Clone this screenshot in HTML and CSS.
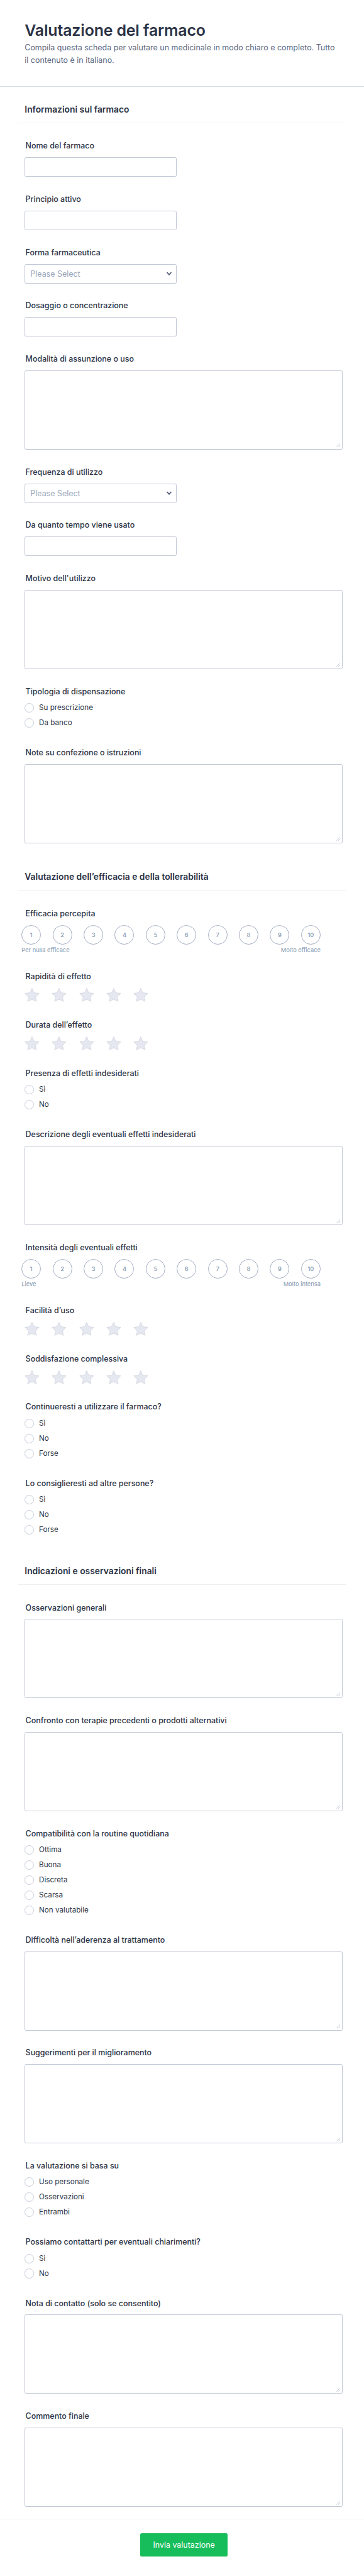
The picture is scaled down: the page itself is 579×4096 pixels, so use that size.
FILE: index.html
```html
<!DOCTYPE html>
<html lang="it">
<head>
    <meta charset="UTF-8">
    <meta name="viewport" content="width=device-width, initial-scale=1.0">
    <title>Valutazione del farmaco</title>
    <link rel="stylesheet" href="styles.css">
</head>
<body>
    <svg class="sprite" aria-hidden="true">
        <symbol id="star" viewBox="0 0 24 22">
            <path d="M11.900.5 15 7.500l7.900 1.100-5.500 5.800 1.500 6.900-7-3.300-7 3.300 1.500-6.900L.9 8.600l7.900-1.100z"/>
        </symbol>
    </svg>

    <form class="form">
        <header class="form-header">
            <h1>Valutazione del farmaco</h1>
            <p>Compila questa scheda per valutare un medicinale in modo chiaro e completo. Tutto il contenuto è in italiano.</p>
        </header>

        <h2 class="section-title">Informazioni sul farmaco</h2>
        <div class="field"><label>Nome del farmaco</label><input class="text" type="text"></div>
        <div class="field"><label>Principio attivo</label><input class="text" type="text"></div>
        <div class="field">
            <label>Forma farmaceutica</label>
            <div class="select">Please Select <svg viewBox="0 0 10 8"><path d="M1.500 2l3.500 3.700L8.500 2"/></svg></div>
        </div>
        <div class="field"><label>Dosaggio o concentrazione</label><input class="text" type="text"></div>
        <div class="field"><label>Modalità di assunzione o uso</label><textarea></textarea></div>
        <div class="field">
            <label>Frequenza di utilizzo</label>
            <div class="select">Please Select <svg viewBox="0 0 10 8"><path d="M1.500 2l3.500 3.700L8.500 2"/></svg></div>
        </div>
        <div class="field"><label>Da quanto tempo viene usato</label><input class="text" type="text"></div>
        <div class="field"><label>Motivo dell'utilizzo</label><textarea></textarea></div>
        <div class="field">
            <label>Tipologia di dispensazione</label>
            <div class="options">
                <label><input type="radio" name="tipologia">Su prescrizione</label>
                <label><input type="radio" name="tipologia">Da banco</label>
            </div>
        </div>
        <div class="field"><label>Note su confezione o istruzioni</label><textarea></textarea></div>

        <h2 class="section-title">Valutazione dell’efficacia e della tollerabilità</h2>
        <div class="field">
            <label>Efficacia percepita</label>
            <div class="scale">
                <div class="scale-row"><span>1</span><span>2</span><span>3</span><span>4</span><span>5</span><span>6</span><span>7</span><span>8</span><span>9</span><span>10</span></div>
                <div class="scale-legend"><span>Per nulla efficace</span><span>Molto efficace</span></div>
            </div>
        </div>
        <div class="field">
            <label>Rapidità di effetto</label>
            <div class="stars"><svg><use href="#star"/></svg><svg><use href="#star"/></svg><svg><use href="#star"/></svg><svg><use href="#star"/></svg><svg><use href="#star"/></svg></div>
        </div>
        <div class="field">
            <label>Durata dell’effetto</label>
            <div class="stars"><svg><use href="#star"/></svg><svg><use href="#star"/></svg><svg><use href="#star"/></svg><svg><use href="#star"/></svg><svg><use href="#star"/></svg></div>
        </div>
        <div class="field">
            <label>Presenza di effetti indesiderati</label>
            <div class="options">
                <label><input type="radio" name="effetti">Sì</label>
                <label><input type="radio" name="effetti">No</label>
            </div>
        </div>
        <div class="field"><label>Descrizione degli eventuali effetti indesiderati</label><textarea></textarea></div>
        <div class="field">
            <label>Intensità degli eventuali effetti</label>
            <div class="scale">
                <div class="scale-row"><span>1</span><span>2</span><span>3</span><span>4</span><span>5</span><span>6</span><span>7</span><span>8</span><span>9</span><span>10</span></div>
                <div class="scale-legend"><span>Lieve</span><span>Molto intensa</span></div>
            </div>
        </div>
        <div class="field">
            <label>Facilità d’uso</label>
            <div class="stars"><svg><use href="#star"/></svg><svg><use href="#star"/></svg><svg><use href="#star"/></svg><svg><use href="#star"/></svg><svg><use href="#star"/></svg></div>
        </div>
        <div class="field">
            <label>Soddisfazione complessiva</label>
            <div class="stars"><svg><use href="#star"/></svg><svg><use href="#star"/></svg><svg><use href="#star"/></svg><svg><use href="#star"/></svg><svg><use href="#star"/></svg></div>
        </div>
        <div class="field">
            <label>Continueresti a utilizzare il farmaco?</label>
            <div class="options">
                <label><input type="radio" name="continuare">Sì</label>
                <label><input type="radio" name="continuare">No</label>
                <label><input type="radio" name="continuare">Forse</label>
            </div>
        </div>
        <div class="field">
            <label>Lo consiglieresti ad altre persone?</label>
            <div class="options">
                <label><input type="radio" name="consigliare">Sì</label>
                <label><input type="radio" name="consigliare">No</label>
                <label><input type="radio" name="consigliare">Forse</label>
            </div>
        </div>

        <h2 class="section-title">Indicazioni e osservazioni finali</h2>
        <div class="field"><label>Osservazioni generali</label><textarea></textarea></div>
        <div class="field"><label>Confronto con terapie precedenti o prodotti alternativi</label><textarea></textarea></div>
        <div class="field">
            <label>Compatibilità con la routine quotidiana</label>
            <div class="options">
                <label><input type="radio" name="routine">Ottima</label>
                <label><input type="radio" name="routine">Buona</label>
                <label><input type="radio" name="routine">Discreta</label>
                <label><input type="radio" name="routine">Scarsa</label>
                <label><input type="radio" name="routine">Non valutabile</label>
            </div>
        </div>
        <div class="field"><label>Difficoltà nell’aderenza al trattamento</label><textarea></textarea></div>
        <div class="field"><label>Suggerimenti per il miglioramento</label><textarea></textarea></div>
        <div class="field">
            <label>La valutazione si basa su</label>
            <div class="options">
                <label><input type="radio" name="base">Uso personale</label>
                <label><input type="radio" name="base">Osservazioni</label>
                <label><input type="radio" name="base">Entrambi</label>
            </div>
        </div>
        <div class="field">
            <label>Possiamo contattarti per eventuali chiarimenti?</label>
            <div class="options">
                <label><input type="radio" name="contatto">Sì</label>
                <label><input type="radio" name="contatto">No</label>
            </div>
        </div>
        <div class="field"><label>Nota di contatto (solo se consentito)</label><textarea></textarea></div>
        <div class="field last"><label>Commento finale</label><textarea></textarea></div>

        <footer class="form-footer">
            <button type="button">Invia valutazione</button>
        </footer>
    </form>
</body>
</html>
```

FILE: styles.css
```css
* {
    box-sizing: border-box;
}
body {
    margin: 0;
    font-family: Inter, sans-serif;
    font-size: 12.45px;
    color: #2c3345;
    background: #fff;
}
.sprite {
    display: none;
}
.form {
    height: 4096px;
    overflow: hidden;
}
.form-header {
    height: 137.5px;
    padding: 32.7px 39.3px 0;
    border-bottom: 1px solid #d7dce6;
}
.form-header h1 {
    margin: 0 0 3.4px;
    font-size: 24.9px;
    font-weight: 600;
    line-height: 30px;
    letter-spacing: -.15px;
}
.form-header p {
    margin: 0;
    line-height: 19.9px;
    color: #57647e;
}
.section-title {
    height: 58.2px;
    margin: 0 29.5px 28px 28.3px;
    padding: 28px 11px 0;
    font-size: 13.85px;
    font-weight: 600;
    line-height: 17px;
    border-bottom: 1px solid #eeeff2;
}
.field + .section-title {
    margin-top: 4.1px;
    height: 44.4px;
    padding-top: 14px;
}
.field {
    padding: 0 34px 27.11px 39.3px;
}
.field > label {
    display: block;
    margin: 0 0 9.9px 1.3px;
    padding-top: .6px;
    font-weight: 500;
    line-height: 16px;
}
.text,
textarea,
.select {
    display: block;
    margin: 0;
    border: 1px solid #c3c8d6;
    border-radius: 2.5px;
    background: #fff;
    outline: none;
}
.text,
.select {
    width: 242px;
    height: 31.1px;
}
.select {
    display: flex;
    align-items: center;
    justify-content: space-between;
    padding: 0 6.4px 0 8px;
    color: #97a6ba;
}
.select svg {
    width: 10px;
    height: 8px;
    fill: none;
    stroke: #4c5872;
    stroke-width: 1.7;
}
textarea {
    width: 505.7px;
    height: 126px;
    resize: none;
    background: url("data:image/svg+xml,%3Csvg xmlns='http://www.w3.org/2000/svg' width='6' height='6' stroke='%23c3c8d6'%3E%3Cpath d='M.3 5.700 5.700.3M3.200 5.700l2.500-2.500'/%3E%3C/svg%3E") no-repeat right 2.5px bottom 2.5px;
}
.options {
    display: grid;
    gap: 8.8px;
    padding: .5px 0 4.3px;
}
.options label {
    display: flex;
    align-items: center;
    gap: 7.7px;
    height: 15.1px;
    font-size: 11.67px;
    line-height: 15px;
}
.options input {
    appearance: none;
    width: 15.1px;
    height: 15.1px;
    margin: 0;
    border: 1px solid #c8cdda;
    border-radius: 50%;
}
.scale {
    width: 475.6px;
    height: 46.3px;
    margin-left: -5px;
    color: #8497ad;
}
.scale-row,
.scale-legend {
    display: flex;
    justify-content: space-between;
}
.scale-row span {
    display: flex;
    align-items: center;
    justify-content: center;
    width: 31px;
    height: 31px;
    border: 1px solid #a6aec3;
    border-radius: 50%;
    font-size: 9.3px;
    font-weight: 500;
}
.scale-legend {
    padding-top: 3px;
    font-size: 9.3px;
    line-height: 12px;
}
.stars {
    display: flex;
    gap: 19.2px;
    height: 23.34px;
    padding-top: .4px;
}
.stars svg {
    width: 24px;
    height: 22px;
    fill: #e6e8f1;
    stroke: #cfd2dc;
    stroke-width: .8;
    stroke-linejoin: round;
}
.last {
    padding-bottom: 18.6px;
}
.form-footer {
    padding: 22.8px 0 0 6.2px;
    border-top: 1px solid #eeeff4;
    text-align: center;
}
.form-footer button {
    width: 138.8px;
    height: 37px;
    margin: 0;
    border: none;
    border-radius: 2.5px;
    background: #18bd5b;
    color: #fff;
    font-family: inherit;
    font-size: 12.45px;
    cursor: pointer;
}
```
